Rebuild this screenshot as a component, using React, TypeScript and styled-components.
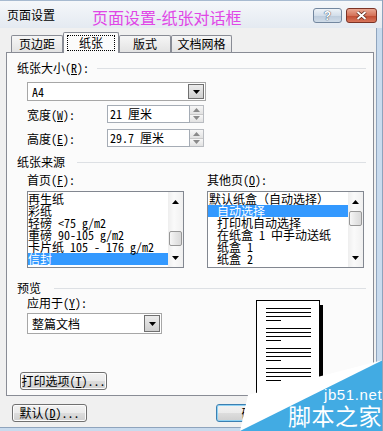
import React from 'react';
import styled, { createGlobalStyle } from 'styled-components';

const GlobalStyle = createGlobalStyle`
  html, body {
    margin: 0;
    padding: 0;
    background: #fff;
  }
  body {
    font-family: "Noto Sans Mono CJK SC", "Noto Sans CJK SC", "Liberation Sans", sans-serif;
    font-size: 12px;
    color: #000;
  }
  * {
    box-sizing: border-box;
  }
`;

// Window frame
const Window = styled.div`
  position: relative;
  width: 383px;
  height: 431px;
  overflow: hidden;
  display: flex;
  flex-direction: column;
  background: #c9dbee;
  border-right: 1px solid #8ea3bc;
`;

const TitleBar = styled.div`
  flex: none;
  height: 28px;
  display: flex;
  align-items: center;
  padding: 0 5px 0 7px;
  background: linear-gradient(#f5f7fa, #e4eaf1);
  border-top: 1px solid #a7bad0;
`;

const TitleText = styled.span`
  font-size: 12px;
  line-height: 14px;
  margin-top: 1px;
`;

const Caption = styled.span`
  margin-left: 37px;
  margin-top: 5px;
  font-family: "Noto Sans CJK SC", sans-serif;
  font-size: 16px;
  line-height: 20px;
  color: #e046e6;
  white-space: nowrap;
`;

const CaptionButtons = styled.div`
  margin-left: auto;
  margin-top: 2px;
  display: flex;
  gap: 4px;
`;

const CaptionButton = styled.div<{ $close?: boolean }>`
  width: ${p => (p.$close ? 31 : 29)}px;
  height: 15px;
  border-radius: 3px;
  display: flex;
  align-items: center;
  justify-content: center;
  border: 1px solid ${p => (p.$close ? '#7b3326' : '#73879f')};
  background: ${p =>
    p.$close
      ? 'linear-gradient(#e9a792 0%, #d5735a 50%, #bf4a30 51%, #d8765c 100%)'
      : 'linear-gradient(#eef3f8 0%, #d3deea 50%, #bccbdc 51%, #d0dce8 100%)'};
  color: #fff;
  font-family: "Liberation Sans", sans-serif;
  font-weight: bold;
  font-size: 12px;
  text-shadow: 0 0 1px #39495d, 0 0 1px #39495d;
`;

const Client = styled.div`
  flex: 1;
  display: flex;
  flex-direction: column;
  margin: 0 5px 3px 0;
  background: #f0f0f0;
  border-right: 1px solid #8fa4bd;
  border-bottom: 1px solid #8fa4bd;
`;

// Tabs
const TabStrip = styled.div`
  position: relative;
  z-index: 1;
  height: 24px;
  display: flex;
  align-items: flex-end;
  padding-left: 11px;
`;

const Tab = styled.div<{ $active?: boolean; $w: number }>`
  width: ${p => p.$w}px;
  height: ${p => (p.$active ? 21 : 17)}px;
  margin-bottom: ${p => (p.$active ? -1 : 0)}px;
  display: flex;
  align-items: center;
  justify-content: center;
  border: 1px solid #898c95;
  border-bottom: none;
  border-radius: 2px 2px 0 0;
  background: ${p => (p.$active ? '#fbfbfb' : 'linear-gradient(#f6f6f6, #e3e3e3)')};
  line-height: 14px;
`;

const FocusRect = styled.span`
  padding: 0 11px;
  height: 14px;
  outline: 1px dotted #000;
  outline-offset: 0;
`;

const Panel = styled.div`
  margin-left: 6px;
  width: 368px;
  height: 344px;
  flex: none;
  border: 1px solid #898c95;
  background: #fbfbfb;
  padding: 8px 7px 0 10px;
  display: flex;
  flex-direction: column;
  overflow: hidden;
`;

const GroupHeader = styled.div<{ $top: number; $gap: number }>`
  display: flex;
  align-items: center;
  gap: ${p => p.$gap}px;
  height: 14px;
  line-height: 14px;
  margin-top: ${p => p.$top}px;
  white-space: nowrap;
  &::after {
    content: '';
    flex: 1;
    height: 1px;
    background: #dde0e4;
  }
`;

const Label = styled.div<{ $top?: number; $left?: number }>`
  height: 14px;
  line-height: 14px;
  white-space: nowrap;
  margin-top: ${p => p.$top ?? 0}px;
  margin-left: ${p => p.$left ?? 0}px;
`;

// Combo box
const Combo = styled.div<{ $w: number; $h: number; $top: number }>`
  width: ${p => p.$w}px;
  height: ${p => p.$h}px;
  margin: ${p => p.$top}px 0 0 10px;
  display: flex;
  align-items: stretch;
  padding: 1px;
  border: 1px solid #a7a7a7;
  background: #fff;
`;

const ComboText = styled.div`
  flex: 1;
  display: flex;
  align-items: center;
  padding-left: 3px;
`;

const DropButton = styled.div`
  width: 16px;
  display: flex;
  align-items: center;
  justify-content: center;
  border: 1px solid #707070;
  background: linear-gradient(#ececec, #cfcfcf);
`;

// Text field with spinner
const FieldRow = styled.div<{ $top: number }>`
  display: flex;
  align-items: center;
  height: 18px;
  margin: ${p => p.$top}px 0 0 10px;
`;

const FieldLabel = styled.span`
  width: 80px;
  white-space: nowrap;
`;

const TextBox = styled.div`
  width: 83px;
  height: 18px;
  border: 1px solid #a5acb5;
  background: #fff;
  padding-left: 2px;
  line-height: 16px;
  white-space: pre;
`;

const Spinner = styled.div`
  width: 14px;
  height: 18px;
  display: flex;
  flex-direction: column;
  border: 1px solid #b9bcc1;
  border-left: none;
  background: #f3f3f3;
`;

const SpinHalf = styled.div<{ $down?: boolean }>`
  flex: 1;
  display: flex;
  align-items: center;
  justify-content: center;
  background: linear-gradient(#f7f7f7, #e2e2e2);
  border-top: ${p => (p.$down ? '1px solid #c9c9c9' : 'none')};
`;

// List boxes
const SourceGrid = styled.div`
  display: grid;
  grid-template-columns: 157px 157px;
  column-gap: 23px;
  margin: 4px 0 0 10px;
`;

const Column = styled.div`
  display: flex;
  flex-direction: column;
`;

const ListBox = styled.div`
  margin-top: 4px;
  height: 77px;
  display: flex;
  border: 1px solid #828790;
  background: #fff;
`;

const ListItems = styled.div`
  flex: 1;
  padding-top: 1px;
`;

const ListItem = styled.div<{ $selected?: boolean; $indent?: number }>`
  height: 12px;
  line-height: 12px;
  white-space: pre;
  padding-left: ${p => p.$indent ?? 0}px;
  background: ${p => (p.$selected ? '#3399ff' : 'transparent')};
  color: ${p => (p.$selected ? '#fff' : '#000')};
`;

const ScrollBar = styled.div`
  width: 15px;
  display: flex;
  flex-direction: column;
  background: linear-gradient(90deg, #eeeeee, #fafafa 40%, #f0f0f0);
`;

const ScrollArrow = styled.div`
  height: 19px;
  flex: none;
  display: flex;
  align-items: center;
  justify-content: center;
`;

const ScrollTrack = styled.div`
  flex: 1;
  display: flex;
  flex-direction: column;
  align-items: center;
`;

const Thumb = styled.div<{ $offset: number }>`
  margin-top: ${p => p.$offset}px;
  width: 13px;
  height: 15px;
  border: 1px solid #979797;
  border-radius: 2px;
  background: linear-gradient(90deg, #f6f6f6, #e6e6e6 50%, #d9d9d9);
`;

// Preview area
const PreviewRow = styled.div`
  flex: 1;
  display: flex;
`;

const PreviewLeft = styled.div`
  width: 239px;
  display: flex;
  flex-direction: column;
`;

const PageThumb = styled.div`
  margin-top: 5px;
  width: 64px;
  height: 96px;
  border: 1px solid #000;
  background: #fff;
  box-shadow: 3px 5px 0 #000;
  padding: 7px 0 0 9px;
  display: flex;
  flex-direction: column;
  gap: 7px;
`;

const TextBlock = styled.div`
  display: flex;
  flex-direction: column;
  gap: 3px;
`;

const TextLine = styled.div<{ $w: number }>`
  width: ${p => p.$w}px;
  height: 1px;
  background: #000;
`;

// Buttons
const PushButton = styled.div<{ $w: number; $top?: number; $left?: number; $default?: boolean }>`
  width: ${p => p.$w}px;
  height: 18px;
  margin-top: ${p => p.$top ?? 0}px;
  margin-left: ${p => p.$left ?? 0}px;
  display: flex;
  align-items: center;
  justify-content: center;
  border: 1px solid ${p => (p.$default ? '#3c7fb1' : '#707070')};
  border-radius: 3px;
  background: linear-gradient(#f2f2f2 0%, #ebebeb 50%, #dddddd 51%, #cfcfcf 100%);
  box-shadow: ${p => (p.$default ? 'inset 0 0 0 1px #8fd2f4' : 'inset 0 0 0 1px #fcfcfc')};
  white-space: nowrap;
  line-height: 14px;
`;

const Footer = styled.div`
  display: flex;
  padding: 8px 5px 0 12px;
  gap: 5px;
`;

const Spacer = styled.div`
  flex: 1;
`;

// Watermark overlay (lies over the dialog corner)
const Watermark = styled.div`
  position: absolute;
  left: 0;
  top: 0;
  width: 383px;
  height: 431px;
  pointer-events: none;
`;

const WatermarkShape = styled.svg`
  position: absolute;
  left: 0;
  top: 0;
`;

const WatermarkDomain = styled.span`
  position: absolute;
  left: 324px;
  top: 386px;
  font-family: "Liberation Sans", sans-serif;
  font-size: 15px;
  line-height: 17px;
  letter-spacing: 0.6px;
  color: #fff;
`;

const WatermarkName = styled.span`
  position: absolute;
  left: 288px;
  top: 401px;
  font-family: "Noto Sans CJK SC", sans-serif;
  font-size: 23px;
  line-height: 28px;
  color: #fff;
  letter-spacing: 0.5px;
`;

const Arrow = ({ dir, color = '#000' }: { dir: 'up' | 'down'; color?: string }) => (
  <svg width="7" height="4" viewBox="0 0 7 4">
    {dir === 'down' ? (
      <polygon points="0,0 7,0 3.5,4" fill={color} />
    ) : (
      <polygon points="0,4 7,4 3.5,0" fill={color} />
    )}
  </svg>
);

const Mn = ({ k }: { k: string }) => (
  <>
    (<u>{k}</u>)
  </>
);

const firstPage = ['再生纸', '彩纸', '轻磅 <75 g/m2', '重磅 90-105 g/m2', '卡片纸 105 - 176 g/m2', '信封'];
const otherPages = ['默认纸盒（自动选择）', '自动选择', '打印机自动选择', '在纸盒 1 中手动送纸', '纸盒 1', '纸盒 2'];

export default function App() {
  return (
    <>
      <GlobalStyle />
      <Window>
        <TitleBar>
          <TitleText>页面设置</TitleText>
          <Caption>页面设置-纸张对话框</Caption>
          <CaptionButtons>
            <CaptionButton>?</CaptionButton>
            <CaptionButton $close>
              <svg width="11" height="9" viewBox="0 0 11 9">
                <path d="M1.5 1 L9.5 8 M9.5 1 L1.5 8" stroke="#5a2418" strokeWidth="3.4" />
                <path d="M1.5 1 L9.5 8 M9.5 1 L1.5 8" stroke="#fff" strokeWidth="2" />
              </svg>
            </CaptionButton>
          </CaptionButtons>
        </TitleBar>

        <Client>
          <TabStrip>
            <Tab $w={52}>页边距</Tab>
            <Tab $w={56} $active>
              <FocusRect>纸张</FocusRect>
            </Tab>
            <Tab $w={52}>版式</Tab>
            <Tab $w={61}>文档网格</Tab>
          </TabStrip>

          <Panel>
            <GroupHeader $top={0} $gap={8}>
              <span>
                纸张大小<Mn k="R" />:
              </span>
            </GroupHeader>
            <Combo $w={179} $h={19} $top={7}>
              <ComboText>A4</ComboText>
              <DropButton>
                <Arrow dir="down" />
              </DropButton>
            </Combo>
            <FieldRow $top={4}>
              <FieldLabel>
                宽度<Mn k="W" />:
              </FieldLabel>
              <TextBox>21 厘米</TextBox>
              <Spinner>
                <SpinHalf>
                  <Arrow dir="up" color="#8a8a8a" />
                </SpinHalf>
                <SpinHalf $down>
                  <Arrow dir="down" color="#8a8a8a" />
                </SpinHalf>
              </Spinner>
            </FieldRow>
            <FieldRow $top={6}>
              <FieldLabel>
                高度<Mn k="E" />:
              </FieldLabel>
              <TextBox>29.7 厘米</TextBox>
              <Spinner>
                <SpinHalf>
                  <Arrow dir="up" color="#8a8a8a" />
                </SpinHalf>
                <SpinHalf $down>
                  <Arrow dir="down" color="#8a8a8a" />
                </SpinHalf>
              </Spinner>
            </FieldRow>

            <GroupHeader $top={8} $gap={12}>
              <span>纸张来源</span>
            </GroupHeader>
            <SourceGrid>
              <Column>
                <Label>
                  首页<Mn k="F" />:
                </Label>
                <ListBox>
                  <ListItems>
                    {firstPage.map((t, i) => (
                      <ListItem key={t} $selected={i === 5}>
                        {t}
                      </ListItem>
                    ))}
                  </ListItems>
                  <ScrollBar>
                    <ScrollArrow>
                      <Arrow dir="up" />
                    </ScrollArrow>
                    <ScrollTrack>
                      <Thumb $offset={20} />
                    </ScrollTrack>
                    <ScrollArrow>
                      <Arrow dir="down" />
                    </ScrollArrow>
                  </ScrollBar>
                </ListBox>
              </Column>
              <Column>
                <Label>
                  其他页<Mn k="O" />:
                </Label>
                <ListBox>
                  <ListItems>
                    {otherPages.map((t, i) => (
                      <ListItem key={t} $selected={i === 1} $indent={i === 0 ? 1 : 9}>
                        {t}
                      </ListItem>
                    ))}
                  </ListItems>
                  <ScrollBar>
                    <ScrollArrow>
                      <Arrow dir="up" />
                    </ScrollArrow>
                    <ScrollTrack>
                      <Thumb $offset={0} />
                    </ScrollTrack>
                    <ScrollArrow>
                      <Arrow dir="down" />
                    </ScrollArrow>
                  </ScrollBar>
                </ListBox>
              </Column>
            </SourceGrid>

            <GroupHeader $top={13} $gap={13}>
              <span>预览</span>
            </GroupHeader>
            <PreviewRow>
              <PreviewLeft>
                <Label $top={1} $left={10}>
                  应用于<Mn k="Y" />:
                </Label>
                <Combo $w={135} $h={21} $top={3}>
                  <ComboText>整篇文档</ComboText>
                  <DropButton>
                    <Arrow dir="down" />
                  </DropButton>
                </Combo>
                <PushButton $w={87} $top={38} $left={3}>
                  打印选项<Mn k="T" />...
                </PushButton>
              </PreviewLeft>
              <PageThumb>
                {[0, 1, 2, 3].map(g => (
                  <TextBlock key={g}>
                    <TextLine $w={45} />
                    <TextLine $w={45} />
                    <TextLine $w={45} />
                    <TextLine $w={15} />
                  </TextBlock>
                ))}
              </PageThumb>
            </PreviewRow>
          </Panel>

          <Footer>
            <PushButton $w={75}>
              默认<Mn k="D" />...
            </PushButton>
            <Spacer />
            <PushButton $w={75} $default>
              确定
            </PushButton>
            <PushButton $w={75}>取消</PushButton>
          </Footer>
        </Client>

        <Watermark>
          <WatermarkShape width="383" height="431" viewBox="0 0 383 431">
            <polygon points="240,431 248,395 383,360 383,431" fill="#ffffff" />
            <polygon points="240,431 383,360 383,431" fill="#42abe3" />
          </WatermarkShape>
          <WatermarkDomain>jb51.net</WatermarkDomain>
          <WatermarkName>脚本之家</WatermarkName>
        </Watermark>
      </Window>
    </>
  );
}
